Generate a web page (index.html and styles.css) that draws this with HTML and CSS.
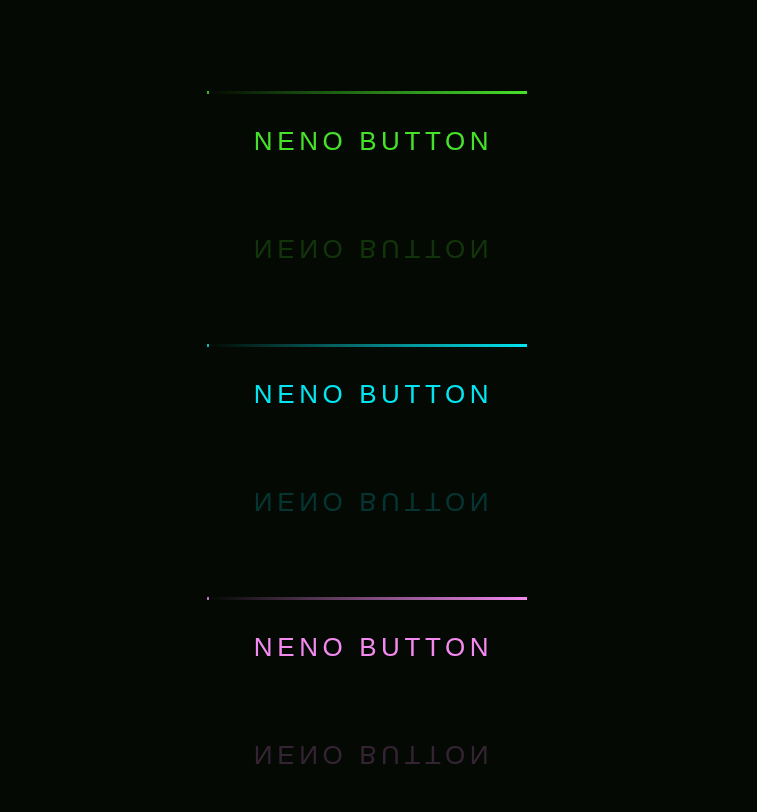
FILE: index.html
```html
<!DOCTYPE html>
<html lang="en">
<head>
<meta charset="utf-8">
<title>Neno Buttons</title>
<link rel="stylesheet" href="styles.css">
</head>
<body>
<main class="stack">
  <a class="neno neno-green" href="#">
    <span class="edge"></span><span class="spark"></span>
    NENO BUTTON
  </a>
  <a class="neno neno-cyan" href="#">
    <span class="edge"></span><span class="spark"></span>
    NENO BUTTON
  </a>
  <a class="neno neno-pink" href="#">
    <span class="edge"></span><span class="spark"></span>
    NENO BUTTON
  </a>
</main>
</body>
</html>
```
FILE: styles.css
```css
html, body {
  margin: 0;
  padding: 0;
}
body {
  background: #040903;
  min-height: 812px;
  font-family: "Liberation Sans", Arial, sans-serif;
}
.stack {
  display: flex;
  flex-direction: column;
  align-items: flex-start;
  gap: 149px;
  padding: 91px 0 0 207px;
}
.neno {
  --c: #46e22a;
  position: relative;
  display: block;
  width: 333px;
  height: 104px;
  box-sizing: border-box;
  padding-top: 35px;
  text-align: center;
  color: var(--c);
  font-size: 26px;
  line-height: 30px;
  letter-spacing: 4.6px;
  text-decoration: none;
  overflow: hidden;
  -webkit-box-reflect: below 0 linear-gradient(transparent 8%, rgba(0,0,0,.2) 28%);
}
.neno-green { --c: #46e22a; }
.neno-cyan { --c: #03e6f2; }
.neno-pink { --c: #f48af0; }
.edge {
  position: absolute;
  top: 0;
  left: 0;
  width: 320px;
  height: 3px;
  background: linear-gradient(90deg, transparent, var(--c));
}
.spark {
  position: absolute;
  top: 0;
  left: 0;
  width: 2px;
  height: 3px;
  background: var(--c);
  opacity: .8;
}
```
